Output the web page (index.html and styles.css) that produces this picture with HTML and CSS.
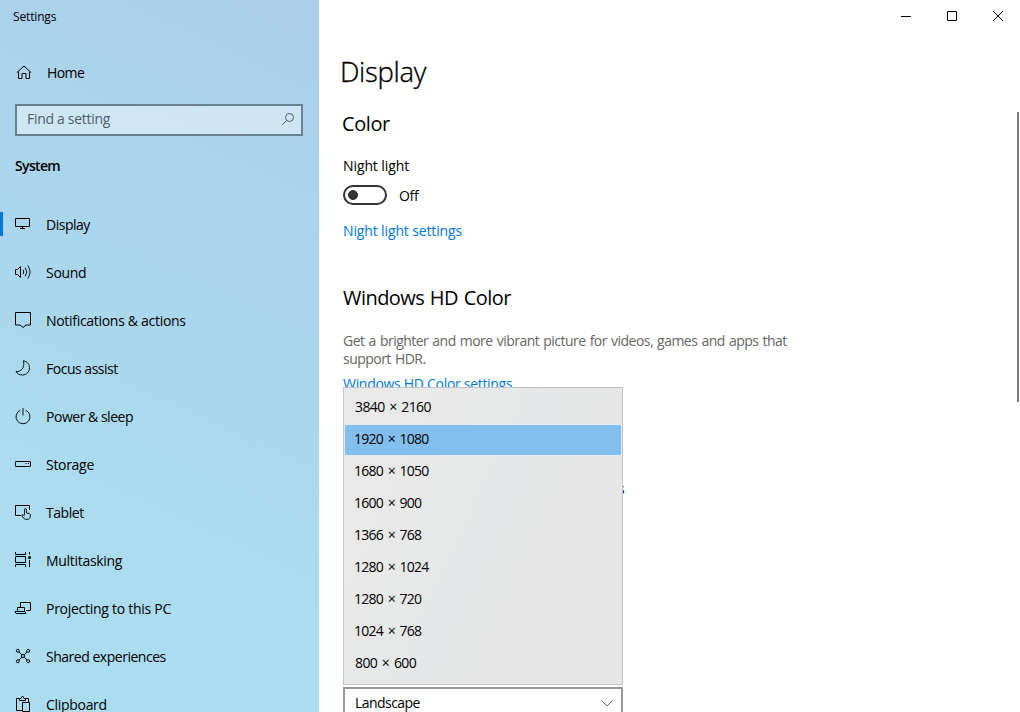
FILE: index.html
```html
<!DOCTYPE html>
<html lang="en">
<head>
<meta charset="utf-8">
<title>Settings</title>
<link rel="stylesheet" href="styles.css">
</head>
<body>
<div class="window">
  <aside class="sidebar">
    <div class="app-title"><span>Settings</span></div>
    <a class="home">
      <svg class="icon" viewBox="0 0 18 18"><path d="M1.800 8.700 9 2l7.200 6.700M3.500 7.500V14.500H7V9.500h4v5h3.500V7.500"/></svg>
      <span>Home</span>
    </a>
    <div class="search">
      <span>Find a setting</span>
      <svg class="search-icon" viewBox="0 0 14 14"><circle cx="8.500" cy="5.500" r="4"/><path d="M5.700 8.300 1 13"/></svg>
    </div>
    <h2 class="group"><span>System</span></h2>
    <nav class="nav">
      <a class="item active"><svg class="icon" viewBox="0 0 18 18"><path d="M1.500 3.500h14v8h-14zM8.500 11.500v2M6 13.500h5"/></svg><span>Display</span></a>
      <a class="item"><svg class="icon" viewBox="0 0 18 18"><path d="M1.500 6.500h2L6.500 3.500v11L3.500 11.500h-2z"/><path class="fine" d="M9 6.700q1.500 2.300 0 4.600M11.300 4.700q3 4.300 0 8.600M13.800 2.500q4.500 6.500 0 13"/></svg><span>Sound</span></a>
      <a class="item"><svg class="icon" viewBox="0 0 18 18"><path d="M1.500 1.500h15v12.500h-4.500L9 16.500 6 14H1.500z"/></svg><span>Notifications &amp; actions</span></a>
      <a class="item"><svg class="icon" viewBox="0 0 18 18"><path class="fine" d="M9.500 1.700c4 1 6 3.800 6 7 0 4-3 7.300-7 7.300-3 0-5.300-1.300-6.500-3.500 5 .5 9-3.500 7.500-10.800z"/></svg><span>Focus assist</span></a>
      <a class="item"><svg class="icon" viewBox="0 0 18 18"><path class="fine" d="M6.300 3.300a7 7 0 1 0 5.400 0M9 1v7.500"/></svg><span>Power &amp; sleep</span></a>
      <a class="item"><svg class="icon" viewBox="0 0 18 18"><rect x="1.500" y="6.500" width="15" height="5" rx=".6"/><path d="M11.500 8.500h1M14 8.500h1"/></svg><span>Storage</span></a>
      <a class="item"><svg class="icon" viewBox="0 0 18 18"><path d="M7 12.500H1.500v-10h14v4.500"/><path class="fine" d="M10.500 12V7q0-1.500 1-1.500t1 1.500v3l3 .7q1 .3 1 1.500 0 4.300-4 4.300-2.500 0-4-2.800l-.8-1.700q1.300-.7 2.800 1"/></svg><span>Tablet</span></a>
      <a class="item"><svg class="icon" viewBox="0 0 18 18"><path d="M1.500 1v2.500h10V1M1.500 5.500h10v6h-10zM1.500 16v-2.500h10V16M15.500 1v2.500M15.500 9v7"/><circle class="solid" cx="15.500" cy="6.500" r="1.500"/></svg><span>Multitasking</span></a>
      <a class="item"><svg class="icon" viewBox="0 0 18 18"><path d="M6.500 8V3.500h10v8h-4.500M3.500 12.500v-4h7v4M1 12.500h10l1 2H2z"/></svg><span>Projecting to this PC</span></a>
      <a class="item"><svg class="icon" viewBox="0 0 18 18"><circle cx="3.800" cy="3.800" r="1.500"/><circle cx="14.200" cy="3.800" r="1.500"/><circle cx="3.800" cy="14.200" r="1.500"/><circle cx="14.200" cy="14.200" r="1.500"/><circle cx="9" cy="9" r="1.500"/><path d="M5 5l3 3M13 5l-3 3M5 13l3-3M13 13l-3-3"/></svg><span>Shared experiences</span></a>
      <a class="item"><svg class="icon" viewBox="0 0 18 18"><path d="M8.500 15.500h-6v-12H5M12 3.500h2.500v4M5.500 5.500v-2h1.500l1-2h1l1 2h1.500v2zM8.500 7.500h7v9h-7z"/></svg><span>Clipboard</span></a>
    </nav>
  </aside>
  <main class="content">
    <header class="titlebar">
      <svg viewBox="0 0 10 10"><path d="M0 5.500h10"/></svg>
      <svg viewBox="0 0 10 10"><path d="M.5.500h9v9h-9z"/></svg>
      <svg viewBox="0 0 10 10"><path d="M0 0l10 10M10 0L0 10"/></svg>
    </header>
    <h1 class="page-title"><span>Display</span></h1>
    <h2 class="section color"><span>Color</span></h2>
    <div class="label"><span>Night light</span></div>
    <div class="toggle-row"><i class="toggle"></i><span>Off</span></div>
    <a class="link night"><span>Night light settings</span></a>
    <h2 class="section hd"><span>Windows HD Color</span></h2>
    <p class="desc">Get a brighter and more vibrant picture for videos, games and apps that<br>support HDR.</p>
    <a class="link"><span>Windows HD Color settings</span></a>
    <div class="field-area">
      <div class="covered">s</div>
      <ul class="menu">
        <li class="wide"><span>3840 × 2160</span></li>
        <li class="selected"><span>1920 × 1080</span></li>
        <li><span>1680 × 1050</span></li>
        <li><span>1600 × 900</span></li>
        <li><span>1366 × 768</span></li>
        <li><span>1280 × 1024</span></li>
        <li><span>1280 × 720</span></li>
        <li><span>1024 × 768</span></li>
        <li class="wide"><span>800 × 600</span></li>
      </ul>
    </div>
    <div class="select"><span>Landscape</span><svg viewBox="0 0 12 7"><path d="M.5.500 6 6l5.500-5.500"/></svg></div>
    <i class="scrollbar"></i>
  </main>
</div>
</body>
</html>
```
FILE: styles.css
```css
* { box-sizing: border-box; }
body { margin: 0; overflow: hidden; background: #fff; color: #000; font: 14px/20px "Open Sans", "Noto Sans", sans-serif; letter-spacing: -.3px; }
h1, h2, p, ul { margin: 0; padding: 0; font-weight: 400; }
ul { list-style: none; }
svg { display: block; fill: none; stroke: currentColor; flex: none; }
.window { display: flex; width: 1020px; height: 712px; overflow: hidden; }
.sidebar { flex: none; width: 319px; height: 712px; overflow: hidden; background: linear-gradient(205deg, #abcee9 0%, #abd4ed 28%, #aad8ed 50%, #abdcef 75%, #abddf0 100%); }
.app-title { height: 34px; padding: 7px 0 0 13px; font-size: 12px; letter-spacing: -.15px; }
.home { display: flex; align-items: center; height: 48px; margin-top: 15px; padding-left: 15px; gap: 14px; letter-spacing: -.6px; }
.icon { width: 18px; height: 18px; }
.fine { stroke-width: .9; }
.solid { fill: currentColor; stroke: none; }
.search { display: flex; align-items: center; justify-content: space-between; width: 288px; height: 32px; margin: 7px 0 0 15px; padding: 0 6px 2px 10px; border: 2px solid #678292; background: rgba(255,255,255,.43); color: #506069; }
.search-icon { width: 14px; height: 14px; }
.group { height: 20px; margin: 20px 0 0 15px; font-size: 14px; font-weight: 600; line-height: 20px; letter-spacing: -.65px; }
.nav { margin-top: 25px; }
.item { display: flex; align-items: center; height: 48px; padding-left: 14px; gap: 14px; }
.item .icon { margin-bottom: 2px; }
.item:nth-child(1), .item:nth-child(4), .item:nth-child(5), .item:nth-child(10) { letter-spacing: -.48px; }
.item:nth-child(7) { letter-spacing: -.45px; }
.item:nth-child(9) { letter-spacing: -.27px; }
.active { background: linear-gradient(#0078d7, #0078d7) 0 11px / 3px 24px no-repeat; }
.content { flex: 1; position: relative; padding-left: 24px; height: 712px; overflow: hidden; }
.titlebar { display: flex; justify-content: flex-end; gap: 36px; height: 32px; padding: 11px 17px 0 0; }
.titlebar svg { width: 10px; height: 10px; }
.page-title { height: 40px; margin: 20px 0 0 -3px; font-size: 27.500px; font-weight: 300; line-height: 40px; letter-spacing: -.3px; -webkit-text-stroke: .35px #000; }
.section { height: 28px; font-size: 20px; line-height: 28px; letter-spacing: -.55px; word-spacing: 1px; }
.color { margin: 18px 0 0 -1px; letter-spacing: -.4px; }
.label { margin-top: 18px; letter-spacing: -.1px; }
.toggle-row { display: flex; align-items: center; gap: 12px; height: 20px; margin-top: 9px; letter-spacing: -.3px; }
.toggle-row span { padding-top: 2px; }
.toggle { width: 44px; height: 20px; border: 2px solid #333; border-radius: 10px; background: radial-gradient(circle at 8px 8px, #333 4.600px, transparent 5.200px); }
.link { display: block; height: 20px; color: #0078d7; }
.night { margin-top: 16px; letter-spacing: -.13px; }
.hd { margin-top: 43px; }
.desc { margin-top: 20px; color: #666; line-height: 18px; letter-spacing: -.53px; word-spacing: 1px; }
.desc + .link { margin-top: 6px; }
.field-area { position: relative; height: 300px; margin-top: -7px; }
.covered { position: absolute; left: 275px; top: 92px; }
.menu { position: absolute; left: 0; top: 0; width: 280px; height: 298px; padding: 4px 1px; border: 1px solid #c3c3c3; background: linear-gradient(115deg, #e9e9e9 20%, #e5e7e8 50%, #e7e7e7 70%); }
.menu li { display: flex; align-items: center; height: 32px; padding: 0 0 2px 9px; letter-spacing: -.72px; word-spacing: 1.600px; }
.menu .wide { padding-left: 10px; letter-spacing: -.6px; }
.menu .selected { background: linear-gradient(#82beee, #82beee) 0 1px / 100% 30px no-repeat; }
.select { display: flex; align-items: center; justify-content: space-between; width: 280px; height: 32px; padding: 0 8px 0 10px; border: 2px solid #999; letter-spacing: -.55px; }
.select svg { width: 12px; height: 7px; color: #666; }
.scrollbar { position: absolute; right: 1px; top: 112px; width: 2px; height: 290px; background: #7a7a7a; }
```
